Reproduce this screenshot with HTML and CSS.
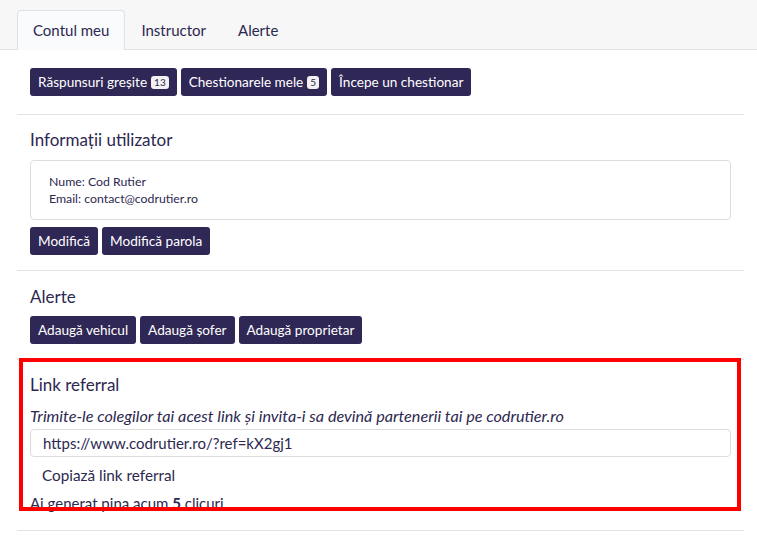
FILE: index.html
```html
<!DOCTYPE html>
<html lang="ro">
<head>
  <meta charset="UTF-8">
  <meta name="viewport" content="width=device-width, initial-scale=1.0"/>
  <title>Contul meu</title>
  <link rel="stylesheet" href="styles.css">
</head>
<body>

  <div class="tabs">
    <a class="tab active">Contul meu</a>
    <a class="tab">Instructor</a>
    <a class="tab">Alerte</a>
  </div>

  <div class="page">

    <div class="section first">
      <div class="btn-row">
        <button class="btn">Răspunsuri greșite <span class="badge">13</span></button>
        <button class="btn">Chestionarele mele <span class="badge">5</span></button>
        <button class="btn">Începe un chestionar</button>
      </div>
    </div>

    <div class="section">
      <h3>Informații utilizator</h3>
      <div class="card">
        <p>Nume: Cod Rutier</p>
        <p>Email: contact@codrutier.ro</p>
      </div>
      <div class="btn-row">
        <button class="btn">Modifică</button>
        <button class="btn">Modifică parola</button>
      </div>
    </div>

    <div class="section alerts">
      <h3>Alerte</h3>
      <div class="btn-row">
        <button class="btn">Adaugă vehicul</button>
        <button class="btn">Adaugă șofer</button>
        <button class="btn">Adaugă proprietar</button>
      </div>
    </div>

    <div class="section referral">
      <h3>Link referral</h3>
      <p class="hint">Trimite-le colegilor tai acest link și invita-i sa devină partenerii tai pe codrutier.ro</p>
      <input class="ref-input" type="text" value="https://www.codrutier.ro/?ref=kX2gj1" readonly>
      <button class="btn-link">Copiază link referral</button>
      <p class="clicks">Ai generat pina acum <b>5</b> clicuri</p>
    </div>

  </div>

  <div class="highlight"></div>

</body>
</html>
```

FILE: styles.css
```css
:root {
  --fg: #2c2850;
  --btn: #2f2756;
  --line: #e2e2e2;
}

* {
  margin: 0;
  padding: 0;
  box-sizing: border-box;
}

body {
  font-family: "Lato", "Open Sans", sans-serif;
  color: var(--fg);
  background: #fff;
}

.tabs {
  display: flex;
  background: #f7f7f7;
  border-bottom: 1px solid #dee2e6;
  padding: 10px 17px 0;
}

.tab {
  font-size: 15px;
  line-height: 38px;
  padding: 0 15px;
  border: 1px solid transparent;
  border-bottom: none;
  border-radius: 4px 4px 0 0;
  margin-bottom: -1px;
  color: var(--fg);
}

.tab.active {
  background: #fafbfc;
  border-color: #dee2e6;
  height: 40px;
}

.page {
  margin: 0 13px 0 17px;
}

.section {
  padding: 13px 13px 15px;
  border-bottom: 1px solid var(--line);
}

.section.first {
  padding-top: 18px;
  padding-bottom: 18px;
}

.section.alerts {
  padding-top: 14px;
}

h3 {
  font-weight: 400;
  font-size: 17px;
  line-height: 24px;
  margin-bottom: 8px;
}

.alerts h3 {
  margin-bottom: 7px;
}

.btn-row {
  display: flex;
  gap: 4px;
}

.btn {
  font-family: inherit;
  font-size: 13.6px;
  color: #fff;
  background: var(--btn);
  border: none;
  border-radius: 3px;
  height: 28px;
  padding: 0 8px;
  display: flex;
  align-items: center;
  gap: 4px;
}

.badge {
  background: #f2f2f2;
  color: var(--btn);
  font-size: 10px;
  line-height: 13px;
  padding: 0 3px;
  border-radius: 3px;
}

.card {
  border: 1px solid #ddd;
  border-radius: 4px;
  padding: 12px 18px;
  margin-bottom: 7px;
  font-size: 12.3px;
  line-height: 17px;
}

.referral {
  padding-bottom: 17px;
}

.hint {
  font-style: italic;
  font-size: 16.2px;
  line-height: 20px;
  margin-top: 9px;
  margin-bottom: 3px;
}

.ref-input {
  display: block;
  width: 100%;
  height: 28px;
  font-family: inherit;
  font-size: 15px;
  color: var(--fg);
  border: 1px solid #ddd;
  border-radius: 4px;
  padding: 0 12px;
  outline: none;
}

.btn-link {
  font-family: inherit;
  font-size: 15.3px;
  color: var(--fg);
  background: none;
  border: none;
  line-height: 20px;
  padding: 8px 12px 4px;
}

.clicks {
  font-size: 15px;
  line-height: 20px;
  margin-top: 4px;
}

.highlight {
  position: absolute;
  left: 19px;
  top: 358px;
  width: 722px;
  height: 153px;
  border: 4px solid #ff0000;
  pointer-events: none;
}
```
